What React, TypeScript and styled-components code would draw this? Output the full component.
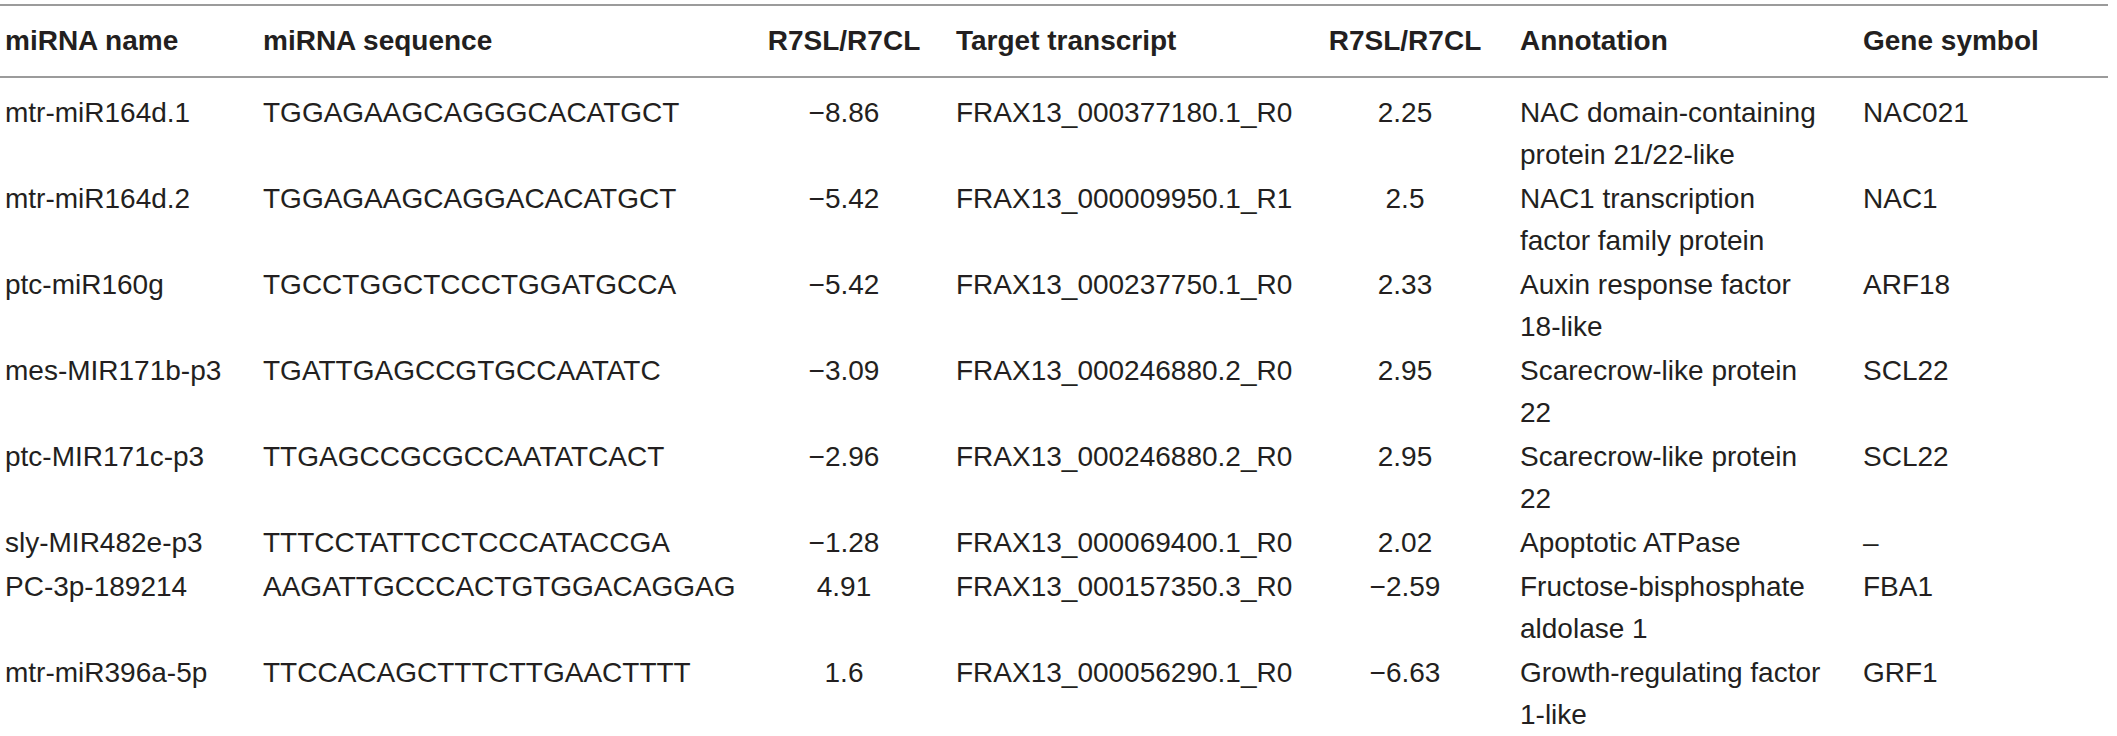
import React from "react";
import styled, { createGlobalStyle } from "styled-components";

const GlobalStyle = createGlobalStyle`
  html, body {
    margin: 0;
    padding: 0;
    background: #ffffff;
  }
  body {
    font-family: "Liberation Sans", Arial, Helvetica, sans-serif;
    color: #231f20;
  }
`;

const COLUMNS = "258px 505px 188px 369px 195px 343px 1fr";

const Table = styled.div`
  margin-top: 4px;
  width: 2108px;
  border-top: 2px solid #9b9b9b;
  font-family: "Liberation Sans", Arial, Helvetica, sans-serif;
  font-size: 28px;
  line-height: 42px;
  color: #231f20;
`;

const HeaderRow = styled.div`
  display: grid;
  grid-template-columns: ${COLUMNS};
  padding: 14px 0;
  border-bottom: 2px solid #9b9b9b;
  font-weight: 700;
`;

const Body = styled.div`
  padding-top: 13px;
`;

const Row = styled.div`
  display: grid;
  grid-template-columns: ${COLUMNS};
  padding: 1px 0;
`;

const Cell = styled.div<{ $center?: boolean; $pr?: number }>`
  padding-left: ${(p) => (p.$center ? 0 : 5)}px;
  padding-right: ${(p) => p.$pr ?? 0}px;
  text-align: ${(p) => (p.$center ? "center" : "left")};
  white-space: ${(p) => (p.$pr ? "normal" : "nowrap")};
`;

type Entry = {
  name: string;
  seq: string;
  fc1: string;
  target: string;
  fc2: string;
  annotation: string;
  gene: string;
};

const rows: Entry[] = [
  {
    name: "mtr-miR164d.1",
    seq: "TGGAGAAGCAGGGCACATGCT",
    fc1: "\u22128.86",
    target: "FRAX13_000377180.1_R0",
    fc2: "2.25",
    annotation: "NAC domain-containing protein 21/22-like",
    gene: "NAC021",
  },
  {
    name: "mtr-miR164d.2",
    seq: "TGGAGAAGCAGGACACATGCT",
    fc1: "\u22125.42",
    target: "FRAX13_000009950.1_R1",
    fc2: "2.5",
    annotation: "NAC1 transcription factor family protein",
    gene: "NAC1",
  },
  {
    name: "ptc-miR160g",
    seq: "TGCCTGGCTCCCTGGATGCCA",
    fc1: "\u22125.42",
    target: "FRAX13_000237750.1_R0",
    fc2: "2.33",
    annotation: "Auxin response factor 18-like",
    gene: "ARF18",
  },
  {
    name: "mes-MIR171b-p3",
    seq: "TGATTGAGCCGTGCCAATATC",
    fc1: "\u22123.09",
    target: "FRAX13_000246880.2_R0",
    fc2: "2.95",
    annotation: "Scarecrow-like protein 22",
    gene: "SCL22",
  },
  {
    name: "ptc-MIR171c-p3",
    seq: "TTGAGCCGCGCCAATATCACT",
    fc1: "\u22122.96",
    target: "FRAX13_000246880.2_R0",
    fc2: "2.95",
    annotation: "Scarecrow-like protein 22",
    gene: "SCL22",
  },
  {
    name: "sly-MIR482e-p3",
    seq: "TTTCCTATTCCTCCCATACCGA",
    fc1: "\u22121.28",
    target: "FRAX13_000069400.1_R0",
    fc2: "2.02",
    annotation: "Apoptotic ATPase",
    gene: "\u2013",
  },
  {
    name: "PC-3p-189214",
    seq: "AAGATTGCCCACTGTGGACAGGAG",
    fc1: "4.91",
    target: "FRAX13_000157350.3_R0",
    fc2: "\u22122.59",
    annotation: "Fructose-bisphosphate aldolase 1",
    gene: "FBA1",
  },
  {
    name: "mtr-miR396a-5p",
    seq: "TTCCACAGCTTTCTTGAACTTTT",
    fc1: "1.6",
    target: "FRAX13_000056290.1_R0",
    fc2: "\u22126.63",
    annotation: "Growth-regulating factor 1-like",
    gene: "GRF1",
  },
];

export default function App() {
  return (
    <>
      <GlobalStyle />
      <Table>
        <HeaderRow>
          <Cell>miRNA name</Cell>
          <Cell>miRNA sequence</Cell>
          <Cell $center $pr={26}>R7SL/R7CL</Cell>
          <Cell>Target transcript</Cell>
          <Cell $center $pr={25}>R7SL/R7CL</Cell>
          <Cell>Annotation</Cell>
          <Cell>Gene symbol</Cell>
        </HeaderRow>
        <Body>
          {rows.map((r, i) => (
            <Row key={i}>
              <Cell>{r.name}</Cell>
              <Cell>{r.seq}</Cell>
              <Cell $center $pr={26}>{r.fc1}</Cell>
              <Cell>{r.target}</Cell>
              <Cell $center $pr={25}>{r.fc2}</Cell>
              <Cell $pr={32}>{r.annotation}</Cell>
              <Cell>{r.gene}</Cell>
            </Row>
          ))}
        </Body>
      </Table>
    </>
  );
}
